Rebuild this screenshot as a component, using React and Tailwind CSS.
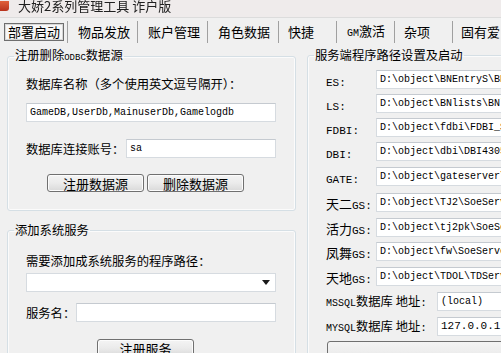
import React from 'react';

const CJK = "font-['Noto_Sans_CJK_SC','Noto_Sans',sans-serif]";
const MONO = "font-['Liberation_Mono','Noto_Sans_CJK_SC',monospace]";

const TABS = [
  { label: '部署启动', cls: 'w-[68px] pl-[4px]', active: true },
  { label: '物品发放', cls: 'w-[70px] pl-[10px]' },
  { label: '账户管理', cls: 'w-[70px] pl-[10px]' },
  { label: '角色数据', cls: 'w-[71px] pl-[10px]' },
  { label: '快捷', cls: 'w-[58px] pl-[9px]' },
  { label: 'GM激活', cls: 'w-[58px] pl-[10px]', small: 'GM', rest: '激活' },
  { label: '杂项', cls: 'w-[58px] pl-[9px]' },
  { label: '固有爱', cls: 'w-[60px] pl-[8px] border-r-0' },
];

const SERVERS = [
  { cjk: '', tag: 'ES:', path: 'D:\\object\\BNEntryS\\BNEntryS.exe', mt: 'mt-[7px]' },
  { cjk: '', tag: 'LS:', path: 'D:\\object\\BNlists\\BNlists.exe', mt: 'mt-[5px]' },
  { cjk: '', tag: 'FDBI:', path: 'D:\\object\\fdbi\\FDBI_Server.exe', mt: 'mt-[5px]' },
  { cjk: '', tag: 'DBI:', path: 'D:\\object\\dbi\\DBI4305.exe', mt: 'mt-[5px]' },
  { cjk: '', tag: 'GATE:', path: 'D:\\object\\gateserver\\gate.exe', mt: 'mt-[6px]' },
  { cjk: '天二', tag: 'GS:', path: 'D:\\object\\TJ2\\SoeServer.exe', mt: 'mt-[7px]' },
  { cjk: '活力', tag: 'GS:', path: 'D:\\object\\tj2pk\\SoeServer.exe', mt: 'mt-[6px]' },
  { cjk: '凤舞', tag: 'GS:', path: 'D:\\object\\fw\\SoeServer.exe', mt: 'mt-[5px]' },
  { cjk: '天地', tag: 'GS:', path: 'D:\\object\\TDOL\\TDServer.exe', mt: 'mt-[6px]' },
];

const TextBox = ({ value = '', className = '' }) => (
  <div
    className={`h-[19px] border border-[#d6dbe0] border-t-[#c5cad0] bg-white pl-[3px] flex items-center overflow-hidden whitespace-nowrap text-[10px] text-black ${MONO} ${className}`}
  >
    {value}
  </div>
);

const Button = ({ children, className = '' }) => (
  <div
    className={`h-[18px] shrink-0 flex items-center justify-center rounded-[3px] border border-[#707070] bg-gradient-to-b from-[#f4f4f4] via-[#ebebeb] to-[#d9d9d9] shadow-[inset_0_0_0_1px_#fcfcfc] text-[13px] leading-none text-black ${className}`}
  >
    {children}
  </div>
);

const Group = ({ title, className = '', children }) => (
  <fieldset className={`min-w-0 rounded-[3px] border border-[#d5dfe5] shadow-[inset_0_0_0_1px_#fbfbfb] ${className}`}>
    <legend className="ml-[-12px] px-[1px] text-[12.3px] leading-[16px] text-black whitespace-nowrap">{title}</legend>
    {children}
  </fieldset>
);

export default function App() {
  return (
    <div className={`w-[501px] h-[353px] overflow-hidden bg-[#f0f0f0] text-black ${CJK}`}>
      {/* title bar */}
      <div className="h-[18px] flex items-start bg-[#efebeb] border-b border-[#dcdcdc] overflow-hidden">
        <div className="w-[9px] h-[10px] mt-[1px] rounded-br-[3px] bg-gradient-to-b from-[#e0603a] to-[#b8321c]" />
        <div className="ml-[9px] mt-[-2px] text-[13px] leading-[16px] text-[#202020] blur-[0.3px] whitespace-nowrap">
          大娇2系列管理工具 诈户版
        </div>
      </div>

      {/* tabs */}
      <div className="h-[27px] flex items-center">
        {TABS.map((t) => (
          <div
            key={t.label}
            className={`h-[22px] shrink-0 flex items-center border-r border-[#a0a0a0] whitespace-nowrap text-[13px] leading-none ${t.cls}`}
          >
            {t.active ? (
              <div className="w-[60px] h-[18px] flex items-center justify-center border border-[#6e6e6e] bg-[#f7f7f7] shadow-[inset_0_0_0_1px_#d8d8d8]">
                {t.label}
              </div>
            ) : t.small ? (
              <span>
                <span className={`${MONO} text-[10px]`}>{t.small}</span>
                {t.rest}
              </span>
            ) : (
              t.label
            )}
          </div>
        ))}
      </div>

      {/* content */}
      <div className="flex items-start pt-[2px]">
        {/* left column */}
        <div className="w-[289px] shrink-0 ml-[7px] flex flex-col">
          <Group title={<span>注册删除<span className={`${MONO} text-[9px]`}>ODBC</span>数据源</span>} className="pl-[18px] pr-[19px] pb-[18px]">
            <div className="mt-[10px] text-[12.3px] leading-[16px] whitespace-nowrap">数据库名称（多个使用英文逗号隔开）：</div>
            <TextBox value="GameDB,UserDb,MainuserDb,Gamelogdb" className="mt-[11px]" />
            <div className="mt-[17px] flex items-center">
              <div className="w-[100px] shrink-0 text-[12.3px] leading-[16px] whitespace-nowrap">数据库连接账号：</div>
              <TextBox value="sa" className="flex-1" />
            </div>
            <div className="mt-[16px] pl-[21px] flex gap-[3px]">
              <Button className="w-[97px]">注册数据源</Button>
              <Button className="w-[97px]">删除数据源</Button>
            </div>
          </Group>

          <Group title="添加系统服务" className="mt-[11px] pl-[18px] pr-[19px] pb-[20px]">
            <div className="mt-[15px] text-[12.3px] leading-[16px] whitespace-nowrap">需要添加成系统服务的程序路径：</div>
            <div className="mt-[4px] h-[19px] border border-[#d6dbe0] bg-white flex items-center justify-end pr-[5px]">
              <svg width="8" height="5" viewBox="0 0 8 5">
                <path d="M0 0h8L4 5z" fill="#1a1a1a" />
              </svg>
            </div>
            <div className="mt-[11px] flex items-center">
              <div className="w-[50px] shrink-0 text-[12.3px] leading-[16px] whitespace-nowrap">服务名：</div>
              <TextBox className="flex-1" />
            </div>
            <div className="mt-[17px] pl-[71px] flex">
              <Button className="w-[97px]">注册服务</Button>
            </div>
          </Group>
        </div>

        {/* right column */}
        <Group title="服务端程序路径设置及启动" className="ml-[11px] w-[260px] shrink-0 pl-[18px] pb-[20px]">
          {SERVERS.map((s) => (
            <div key={s.path} className={`flex items-center h-[19px] ${s.mt}`}>
              <div className="w-[50px] shrink-0 whitespace-nowrap">
                {s.cjk && <span className="text-[13px]">{s.cjk}</span>}
                <span className={`${MONO} text-[11px]`}>{s.tag}</span>
              </div>
              <TextBox value={s.path} className="flex-1" />
            </div>
          ))}
          <div className="flex items-center h-[19px] mt-[6px]">
            <div className="w-[111px] shrink-0 whitespace-nowrap text-[12.3px]">
              <span className={`${MONO} text-[10px]`}>MSSQL</span>数据库 地址<span className={`${MONO} text-[11px]`}>:</span>
            </div>
            <TextBox value="(local)" className="flex-1" />
          </div>
          <div className="flex items-center h-[19px] mt-[6px]">
            <div className="w-[111px] shrink-0 whitespace-nowrap text-[12.3px]">
              <span className={`${MONO} text-[10px]`}>MYSQL</span>数据库 地址<span className={`${MONO} text-[11px]`}>:</span>
            </div>
            <TextBox value="127.0.0.1" className="flex-1 text-[11px]" />
          </div>
          <div className="mt-[5px] ml-[1px] w-[220px] h-[26px] rounded-[3px] border border-[#707070] bg-gradient-to-b from-[#f4f4f4] to-[#e4e4e4]" />
        </Group>
      </div>
    </div>
  );
}
